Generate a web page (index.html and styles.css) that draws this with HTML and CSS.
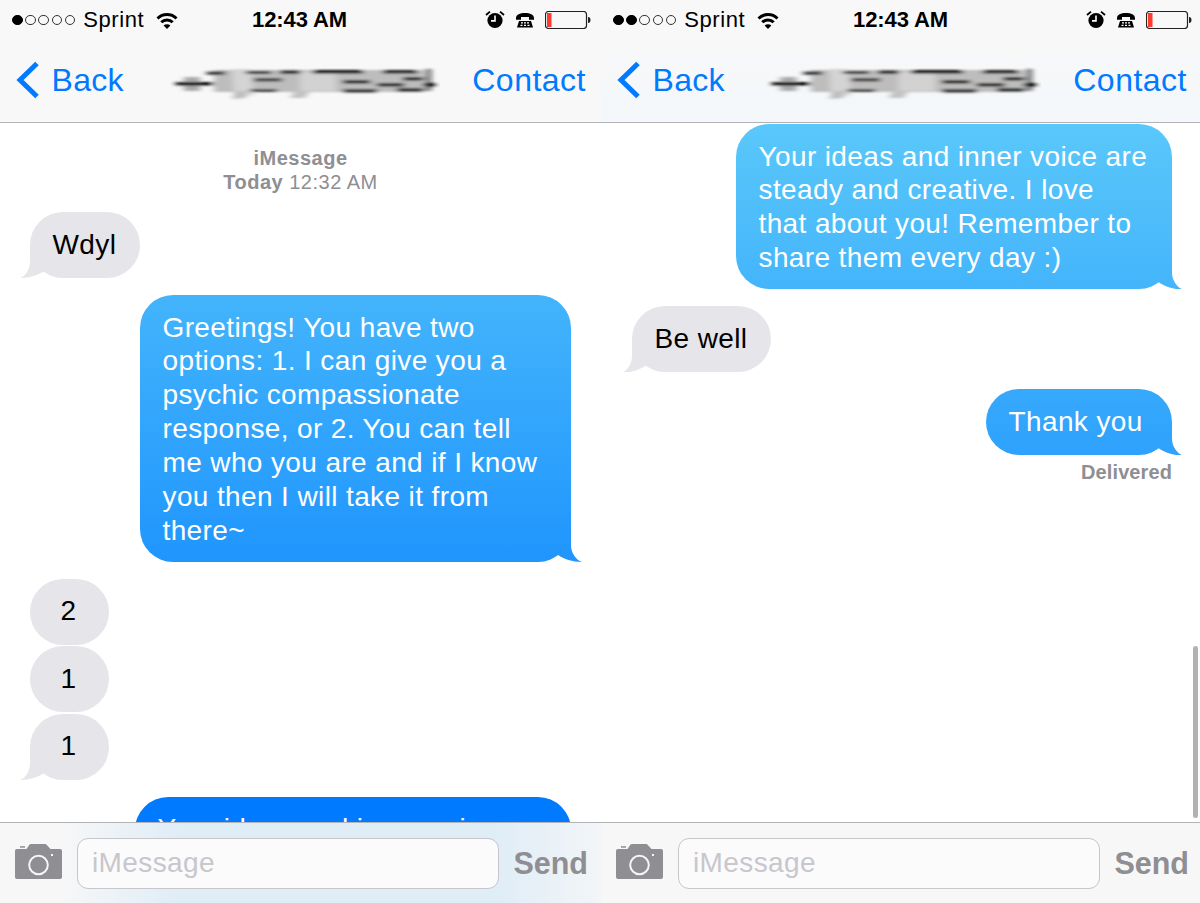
FILE: index.html
```html
<!DOCTYPE html>
<html lang="en">
<head>
<meta charset="utf-8">
<title>Messages</title>
<link rel="stylesheet" href="styles.css">
</head>
<body>
<svg class="defs" width="0" height="0" aria-hidden="true">
  <defs>
    <filter id="smear" x="-5%" y="-30%" width="110%" height="160%"><feGaussianBlur stdDeviation="3 1.300"/></filter>
    <g id="smudge" filter="url(#smear)">
      <rect x="44" y="9" width="210" height="22" fill="#bdbdbd"/>
      <rect x="130" y="11" width="36" height="19" fill="#d2d2d2"/>
      <polygon points="62,8 80,8 84,34 64,36" fill="#d4d4d4"/>
      <polygon points="66,30 76,30 76,37 62,38" fill="#bdbdbd"/>
      <polygon points="125,30 140,30 135,37 120,37" fill="#c2c2c2"/>
      <rect x="14" y="16" width="16" height="14" fill="#aaa"/>
      <rect x="6" y="21" width="37" height="3.500" fill="#000"/>
      <rect x="37" y="10.500" width="18" height="3.500" fill="#333"/>
      <rect x="76" y="10" width="25" height="3" fill="#333"/>
      <rect x="84" y="17" width="28" height="3.500" fill="#444"/>
      <rect x="80" y="28" width="27" height="3" fill="#444"/>
      <rect x="110" y="9.500" width="20" height="3.500" fill="#222"/>
      <rect x="143" y="9" width="50" height="3.500" fill="#111"/>
      <rect x="173" y="19" width="27" height="3.500" fill="#222"/>
      <rect x="173" y="28" width="34" height="3.500" fill="#333"/>
      <rect x="207" y="22" width="27" height="3.500" fill="#222"/>
      <rect x="213" y="9" width="34" height="3.500" fill="#222"/>
      <rect x="233" y="16" width="20" height="3.500" fill="#222"/>
      <rect x="227" y="27" width="26" height="3.500" fill="#222"/>
      <rect x="256" y="8" width="4" height="22" fill="#111"/>
      <rect x="253" y="22" width="12" height="3.500" fill="#000"/>
    </g>
    <g id="wifi" fill="none" stroke="#000" stroke-width="3">
      <path d="M1.500 7.500a13.500 13.500 0 0 1 19 0"/>
      <path d="M5.300 11.300a8 8 0 0 1 11.400 0"/>
      <path d="M11 18l-3.400-3.400a4.800 4.800 0 0 1 6.800 0z" fill="#000" stroke="none"/>
    </g>
    <g id="alarm">
      <circle cx="10" cy="10.500" r="7.600" fill="#000"/>
      <path d="M10 5.500v5.400H6" fill="none" stroke="#fff" stroke-width="1.600"/>
      <path d="M1 5l4-3.400M19 5l-4-3.400" fill="none" stroke="#000" stroke-width="1.800"/>
    </g>
    <g id="phone">
      <path d="M1 6.200C1 2.500 5 1 10 1s9 1.500 9 5.200v1.600h-5V5H6v2.800H1z" fill="#000"/>
      <path d="M4 9h12l2 6.500H2z" fill="#000"/>
      <path d="M6 10.800h2M9 10.800h2M12 10.800h2M5.500 13.300h2M9 13.300h2M12.500 13.300h2" stroke="#fff" stroke-width="1.300"/>
    </g>
    <g id="battery">
      <rect x="0.500" y="0.500" width="41" height="17" rx="3" fill="none" stroke="#222" stroke-width="1.200"/>
      <rect x="2" y="2" width="4.500" height="14" fill="#ff3b30"/>
      <path d="M43 6c2 0 2.500 1.500 2.500 3s-.5 3-2.500 3z" fill="#222"/>
    </g>
    <g id="camera">
      <path d="M2 5h9.500L14 1.200C14.500.400 15.200 0 16 0h14c.8 0 1.500.400 2 1.200L35.500 5H45c1.200 0 2 .8 2 2v26c0 1.200-.8 2-2 2H2c-1.200 0-2-.8-2-2V7c0-1.200.8-2 2-2z" fill="#8e8e93"/>
      <rect x="5" y="2.200" width="5" height="1.500" fill="#8e8e93"/>
      <circle cx="23.500" cy="21" r="9.300" fill="none" stroke="#f6f6f6" stroke-width="2"/>
      <rect x="36" y="10" width="2" height="2" fill="#f6f6f6"/>
    </g>
  </defs>
</svg>

<main class="screens">
  <section class="phone">
    <header class="bar bar-plain">
      <div class="status">
        <div class="status-side">
          <span class="signal"><i class="dot on"></i><i class="dot"></i><i class="dot"></i><i class="dot"></i><i class="dot"></i></span>
          <span class="carrier">Sprint</span>
          <svg class="wifi" width="22" height="18" viewBox="0 0 22 18"><use href="#wifi"/></svg>
        </div>
        <div class="clock">12:43 AM</div>
        <div class="status-side status-end">
          <svg width="20" height="20" viewBox="0 0 20 20"><use href="#alarm"/></svg>
          <svg width="20" height="17" viewBox="0 0 20 17"><use href="#phone"/></svg>
          <svg width="46" height="18" viewBox="0 0 46 18"><use href="#battery"/></svg>
        </div>
      </div>
      <nav class="nav">
        <a class="back"><svg class="chevron" width="24" height="38" viewBox="0 0 24 38"><path d="M21 2.500 4 19l17 16.500"/></svg>Back</a>
        <svg class="smudge" width="270" height="45" viewBox="0 0 270 45" preserveAspectRatio="none"><use href="#smudge"/></svg>
        <a class="contact">Contact</a>
      </nav>
    </header>
    <div class="thread">
      <div class="stamp"><b>iMessage</b><br><b>Today</b> 12:32 AM</div>
      <p class="bubble in tail">Wdyl</p>
      <p class="bubble out tail wide-a">Greetings! You have two<br>options: 1. I can give you a<br>psychic compassionate<br>response, or 2. You can tell<br>me who you are and if I know<br>you then I will take it from<br>there~</p>
      <div class="group">
        <p class="bubble in digit">2</p>
        <p class="bubble in digit">1</p>
        <p class="bubble in digit tail">1</p>
      </div>
      <p class="bubble out solid wide-b">Your ideas and inner voice are</p>
    </div>
    <footer class="composer composer-tint">
      <svg class="camera" width="47" height="35" viewBox="0 0 47 35"><use href="#camera"/></svg>
      <div class="field">iMessage</div>
      <span class="send">Send</span>
    </footer>
  </section>

  <section class="phone phone-second">
    <header class="bar bar-tint">
      <div class="status">
        <div class="status-side">
          <span class="signal"><i class="dot on"></i><i class="dot on"></i><i class="dot"></i><i class="dot"></i><i class="dot"></i></span>
          <span class="carrier">Sprint</span>
          <svg class="wifi" width="22" height="18" viewBox="0 0 22 18"><use href="#wifi"/></svg>
        </div>
        <div class="clock">12:43 AM</div>
        <div class="status-side status-end">
          <svg width="20" height="20" viewBox="0 0 20 20"><use href="#alarm"/></svg>
          <svg width="20" height="17" viewBox="0 0 20 17"><use href="#phone"/></svg>
          <svg width="46" height="18" viewBox="0 0 46 18"><use href="#battery"/></svg>
        </div>
      </div>
      <nav class="nav">
        <a class="back"><svg class="chevron" width="24" height="38" viewBox="0 0 24 38"><path d="M21 2.500 4 19l17 16.500"/></svg>Back</a>
        <svg class="smudge" width="275" height="45" viewBox="0 0 270 45" preserveAspectRatio="none"><use href="#smudge"/></svg>
        <a class="contact">Contact</a>
      </nav>
    </header>
    <div class="thread thread-second">
      <p class="bubble out tail wide-b">Your ideas and inner voice are<br>steady and creative. I love<br>that about you! Remember to<br>share them every day :)</p>
      <p class="bubble in tail">Be well</p>
      <p class="bubble out tail wide-c">Thank you</p>
      <div class="receipt">Delivered</div>
      <div class="scrollbar"></div>
    </div>
    <footer class="composer">
      <svg class="camera" width="47" height="35" viewBox="0 0 47 35"><use href="#camera"/></svg>
      <div class="field">iMessage</div>
      <span class="send">Send</span>
    </footer>
  </section>
</main>
</body>
</html>
```

FILE: styles.css
```css
* { box-sizing: border-box; }

html, body {
  margin: 0;
  height: 903px;
  overflow: hidden;
  background: #fff;
  font-family: "Liberation Sans", Arial, sans-serif;
  color: #000;
}

.defs { position: absolute; }

.screens {
  display: grid;
  grid-template-columns: 601px 599px;
  height: 903px;
}

.phone {
  display: flex;
  flex-direction: column;
  height: 903px;
  min-width: 0;
  overflow: hidden;
}

/* header */
.bar {
  height: 123px;
  flex: none;
  border-bottom: 1px solid #b4b4b6;
}
.bar-plain { background: #f8f8f8; }
.bar-tint { background: linear-gradient(#f8f8f8 30%, #f3f7fb 100%); }

.status {
  display: grid;
  grid-template-columns: 240px auto 1fr;
  align-items: center;
  height: 40px;
  padding: 0 10px 0 12px;
}
.phone-second .status { padding-right: 8px; }
.status-side {
  display: flex;
  align-items: center;
}
.status-end {
  justify-content: flex-end;
  gap: 10px;
}
.signal {
  display: flex;
  align-items: center;
  gap: 2.700px;
}
.dot {
  width: 10.500px;
  height: 10.500px;
  border: 1px solid #333;
  border-radius: 50%;
}
.dot.on { background: #000; border-color: #000; }
.carrier {
  margin-left: 8px;
  font-size: 22px;
  letter-spacing: 0.600px;
}
.wifi { margin-left: 12px; }
.clock {
  font-size: 22px;
  font-weight: 700;
  letter-spacing: -0.100px;
}

.nav {
  display: flex;
  align-items: center;
  justify-content: space-between;
  height: 82px;
  padding: 0 15px 2px 15.500px;
  font-size: 32px;
  color: #007aff;
}
.phone-second .nav { padding-right: 13px; }
.back { display: flex; align-items: center; gap: 12px; letter-spacing: 0.300px; }
.contact { letter-spacing: 0.500px; }
.chevron { fill: none; stroke: #007aff; stroke-width: 5; }
.smudge { margin: 6px 0 0 14px; }
.phone-second .smudge { margin-left: 9px; }

/* thread */
.thread {
  position: relative;
  flex: 1;
  min-height: 0;
  overflow: hidden;
  padding: 23px 30px 0;
  display: flex;
  flex-direction: column;
  align-items: flex-start;
}
.thread-second { padding: 1px 28px 0 31px; }

.stamp {
  align-self: center;
  text-align: center;
  font-size: 20px;
  line-height: 24px;
  letter-spacing: 0.500px;
  color: #8e8e93;
  margin-bottom: 18px;
}

.bubble {
  position: relative;
  flex: none;
  margin: 0 0 17px;
  min-height: 66px;
  padding: 15.500px 23.500px 14.500px 22.500px;
  border-radius: 33px;
  font-size: 28px;
  line-height: 33.850px;
  letter-spacing: 0.380px;
  white-space: nowrap;
}
.in { background: #e5e5ea; color: #000; }
.out {
  align-self: flex-end;
  color: #fff;
  background: linear-gradient(#5ac8fa 122px, #007aff 800px) fixed;
}
.solid { background: #007aff; }
.tail::after {
  content: "";
  position: absolute;
  bottom: 0;
  width: 30px;
  height: 34px;
}
.out.tail::after {
  right: -11px;
  background: inherit;
  clip-path: path("M19 0V17C19 25 24 32 30 34C20 34 12 31 6 27L0 12Z");
}
.in.tail::after {
  left: -10px;
  background: #e5e5ea;
  clip-path: path("M10 0V17C10 25 6 32 0 34C10 34 18 31 24 27L30 12Z");
}
.wide-a { width: 431px; }
.wide-b { width: 436px; }
.wide-c { width: 186px; }

.group {
  display: flex;
  flex-direction: column;
  gap: 1.500px;
  margin-bottom: 17px;
}
.group .bubble { margin: 0; }
.digit { width: 79px; text-align: center; padding-left: 0; padding-right: 2px; }

.receipt {
  align-self: flex-end;
  margin-top: -12px;
  font-size: 20px;
  font-weight: 700;
  line-height: 24px;
  letter-spacing: 0.100px;
  color: #8e8e93;
}

.scrollbar {
  position: absolute;
  right: 2px;
  top: 523px;
  width: 5px;
  height: 172px;
  border-radius: 3px;
  background: #b2b2b2;
}

/* composer */
.composer {
  position: relative;
  flex: none;
  height: 81px;
  display: flex;
  align-items: center;
  padding: 0 13px 0 15px;
  border-top: 1px solid #b4b4b6;
  background: #f7f7f7;
}
.phone-second .composer { padding-right: 11px; }
.composer-tint {
  background: linear-gradient(90deg, #f7f7f7 10%, #dfedf7 30%, #dfedf7 82%, #f3f5f7 100%);
}
.camera { flex: none; margin-top: -3px; }
.field {
  flex: 1;
  height: 51px;
  margin: 0 14.500px 0 15px;
  padding-left: 14px;
  display: flex;
  align-items: center;
  border: 1.500px solid #c6c6cb;
  border-radius: 11px;
  background: #fbfbfb;
  font-size: 28px;
  letter-spacing: 0.400px;
  color: #c7c7cd;
}
.send {
  font-size: 30.500px;
  font-weight: 700;
  color: #8e8e93;
}
```
